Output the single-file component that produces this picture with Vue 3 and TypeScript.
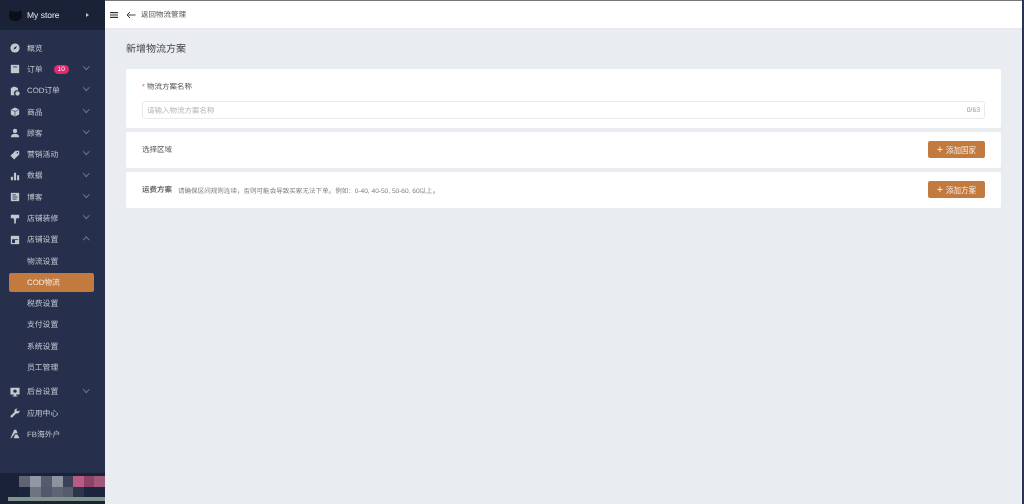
<script setup lang="ts">
type MenuItem = {
  label: string;
  icon?: string;
  arrow?: "down" | "up";
  badge?: string;
  active?: boolean;
  gap?: boolean;
};

const menu: MenuItem[] = [
  { label: "概览", icon: "overview" },
  { label: "订单", icon: "order", arrow: "down", badge: "10" },
  { label: "COD订单", icon: "cod", arrow: "down" },
  { label: "商品", icon: "box", arrow: "down" },
  { label: "顾客", icon: "user", arrow: "down" },
  { label: "营销活动", icon: "tag", arrow: "down" },
  { label: "数据", icon: "chart", arrow: "down" },
  { label: "博客", icon: "blog", arrow: "down" },
  { label: "店铺装修", icon: "brush", arrow: "down" },
  { label: "店铺设置", icon: "store", arrow: "up" },
  { label: "物流设置" },
  { label: "COD物流", active: true },
  { label: "税费设置" },
  { label: "支付设置" },
  { label: "系统设置" },
  { label: "员工管理" },
  { label: "后台设置", icon: "monitor", arrow: "down", gap: true },
  { label: "应用中心", icon: "wrench" },
  { label: "FB海外户", icon: "fb" },
];

// the blurred-out account block at the foot of the sidebar
const mosaic = [
  "#1a2238", "#5e6474", "#9396a3", "#565c6e", "#8f93a0", "#3b4157", "#b85c86", "#8f4268", "#a0597c",
  "#1a2238", "#1c2540", "#6f7280", "#52586b", "#5f6475", "#575c6c", "#2e3449", "#1c2540", "#1c2540",
];
</script>

<template>
  <div class="page">
    <aside class="side">
      <div class="store">
        <svg class="cat" viewBox="0 0 14 12"><path d="M1 0l3 2h6l3-2 1 6c0 4-3 6-7 6S0 10 0 6z" fill="#0c0f1a" /></svg>
        <span class="store-name">My store</span>
        <span class="store-arrow"></span>
      </div>
      <nav class="menu">
        <div
          v-for="item in menu"
          :key="item.label"
          class="row"
          :class="{ active: item.active, gap: item.gap, sub: !item.icon }"
        >
          <svg v-if="item.icon" class="icon" viewBox="0 0 12 12" fill="#c3c7d0">
            <template v-if="item.icon === 'overview'">
              <circle cx="6" cy="6" r="5.5" />
              <path d="M8.5 3.5L6.8 7 4 8l1.4-3z" fill="#26314e" />
            </template>
            <template v-else-if="item.icon === 'order'">
              <path d="M1 1h10v10H1z" />
              <path d="M3.5 3h5v1h-5z" fill="#26314e" />
            </template>
            <template v-else-if="item.icon === 'cod'">
              <path d="M5 .5l4.5 2v3a3.5 3.5 0 0 0-4 5.5H1V2.5z" />
              <circle cx="9" cy="9" r="2.6" />
            </template>
            <template v-else-if="item.icon === 'box'">
              <path d="M6 .5l5 2.5v6l-5 2.5L1 9V3z" />
              <path d="M1 3l5 2.5L11 3M6 5.5v6" fill="none" stroke="#26314e" stroke-width=".7" />
            </template>
            <template v-else-if="item.icon === 'user'">
              <circle cx="6" cy="3.5" r="2.6" />
              <path d="M1 11c0-3 2.5-4 5-4s5 1 5 4z" />
            </template>
            <template v-else-if="item.icon === 'tag'">
              <path d="M.5 7l6-6H11v4.5l-6 6z" />
              <circle cx="8.8" cy="3.2" r=".9" fill="#26314e" />
            </template>
            <template v-else-if="item.icon === 'chart'">
              <path d="M1 7h2.5v4H1zM4.7 2h2.6v9H4.7zM8.5 5H11v6H8.5z" />
            </template>
            <template v-else-if="item.icon === 'blog'">
              <path d="M1 1h10v10H1z" />
              <path d="M3 3.5h4M3 6h6M3 8.5h5" stroke="#26314e" />
            </template>
            <template v-else-if="item.icon === 'brush'">
              <path d="M1 1h10v4H1zM4.5 5h3v2H7v4.5H5V7h-.5z" />
            </template>
            <template v-else-if="item.icon === 'store'">
              <path d="M1 1h10v10H1z" />
              <path d="M2.5 5h7v1h-7zM2.5 6H6v3.5H2.5z" fill="#26314e" />
            </template>
            <template v-else-if="item.icon === 'monitor'">
              <path d="M.5 1h11v8h-4v1.5H9v1H3v-1h1.5V9h-4z" />
              <circle cx="6" cy="5" r="2" fill="#26314e" />
            </template>
            <template v-else-if="item.icon === 'wrench'">
              <path d="M11.5 3a3.2 3.2 0 0 1-4.2 3.5L3 11a1.4 1.4 0 0 1-2-2l4.500-4.300A3.2 3.2 0 0 1 9 .5L7.5 2.5 9 4z" />
            </template>
            <template v-else>
              <path d="M5 1h2.5L9 5H6l-4.500 6h-1z" />
              <path d="M6 6.5h3l2.5 4.5h-7z" />
            </template>
          </svg>
          <span class="label">{{ item.label }}</span>
          <span v-if="item.badge" class="badge">{{ item.badge }}</span>
          <span v-if="item.arrow" class="arrow" :class="item.arrow"></span>
        </div>
      </nav>
      <div class="mosaic">
        <i v-for="(c, i) in mosaic" :key="i" :style="{ background: c }"></i>
        <div class="mosaic-line"></div>
      </div>
    </aside>

    <main class="main">
      <header class="top">
        <svg class="burger" viewBox="0 0 8 6"><path d="M0 .7h8M0 3h8M0 5.3h8" stroke="#333" stroke-width="1.2" /></svg>
        <svg class="back" viewBox="0 0 10 8"><path d="M9.5 4H1M4 1L1 4l3 3" fill="none" stroke="#444" stroke-width="1" /></svg>
        <span class="back-text">返回物流管理</span>
      </header>
      <section class="content">
        <h1>新增物流方案</h1>
        <div class="card name-card">
          <div class="field-label"><span class="star">*</span> 物流方案名称</div>
          <div class="input">
            <span class="placeholder">请输入物流方案名称</span>
            <span class="count">0/63</span>
          </div>
        </div>
        <div class="card action">
          <span class="card-title">选择区域</span>
          <button class="add"><span class="plus">+</span>添加国家</button>
        </div>
        <div class="card action">
          <span class="card-title strong">运费方案</span>
          <span class="hint">请确保区间规则连续，否则可能会导致买家无法下单。例如：0-40, 40-50, 50-60, 60以上。</span>
          <button class="add"><span class="plus">+</span>添加方案</button>
        </div>
      </section>
    </main>
  </div>
</template>

<style>
html,
body {
  margin: 0;
  overflow: hidden;
  background: #e9ecf1;
}
</style>

<style scoped>
.page {
  display: flex;
  width: 1024px;
  height: 504px;
  box-sizing: border-box;
  border-right: 2px solid #2a3350;
  overflow: hidden;
  font-family: "Liberation Sans", "Noto Sans CJK SC", sans-serif;
  text-rendering: geometricPrecision;
  background: #e9ecf1;
  filter: blur(0.45px);
}

.side {
  position: relative;
  flex: 0 0 105px;
  display: flex;
  flex-direction: column;
  background: #26304c;
}

.store {
  display: flex;
  align-items: center;
  height: 30px;
  padding-left: 9px;
  background: #1a2238;
  color: #e6e8ec;
}

.cat {
  width: 13px;
  height: 11px;
  margin-right: 5px;
}

.store-name {
  font-size: 8.5px;
}

.store-arrow {
  margin-left: 26px;
  border-left: 3px solid #c3c7d0;
  border-top: 2.5px solid transparent;
  border-bottom: 2.5px solid transparent;
}

.menu {
  padding-top: 7.5px;
}

.row {
  display: flex;
  align-items: center;
  height: 21.3px;
  padding-left: 10px;
  font-size: 7.8px;
  color: #c3c7d0;
  box-sizing: border-box;
}

.row.gap {
  margin-top: 3px;
}

.row.sub {
  padding-left: 27px;
}

.row.active {
  width: 85px;
  height: 19.5px;
  margin: 0.9px 0;
  margin-left: 9px;
  padding-left: 18px;
  background: #c27a3e;
  border-radius: 2px;
  color: #f4ede6;
}

.icon {
  width: 10px;
  height: 10px;
  margin-right: 7px;
  flex: none;
}

.label {
  white-space: nowrap;
}

.badge {
  margin-left: 11px;
  padding: 0 4px;
  height: 9px;
  line-height: 9px;
  border-radius: 5px;
  background: #e5286f;
  color: #fff;
  font-size: 6.5px;
}

.arrow {
  position: absolute;
  left: 84px;
  width: 3.5px;
  height: 3.5px;
  border-right: 1px solid #737b8f;
  border-bottom: 1px solid #737b8f;
}

.arrow.down {
  transform: translateY(-3px) rotate(45deg);
}

.arrow.up {
  transform: translateY(0) rotate(-135deg);
}

.mosaic {
  position: absolute;
  left: 0;
  right: 0;
  bottom: 0;
  height: 31px;
  display: grid;
  grid-template-columns: 19px 11px 11px 11px 11px 10px 11px 10px 11px;
  grid-auto-rows: 10.5px;
  padding-top: 3px;
  box-sizing: border-box;
  align-content: start;
  background: #1a2238;
}

.mosaic-line {
  position: absolute;
  left: 8px;
  right: 0;
  bottom: 3px;
  height: 4px;
  background: #7f958b;
}

.main {
  flex: 1;
  display: flex;
  flex-direction: column;
  min-width: 0;
}

.top {
  display: flex;
  align-items: center;
  height: 29px;
  box-sizing: border-box;
  padding-left: 5px;
  background: #fff;
  border-top: 1px solid #777;
  border-bottom: 1px solid #e4e7ec;
}

.burger {
  width: 8px;
  height: 6px;
  margin-right: 8px;
}

.back {
  width: 10px;
  height: 8px;
  margin-right: 5px;
}

.back-text {
  font-size: 7.5px;
  color: #555;
}

.content {
  flex: 1;
  padding: 14px 21px 0 21px;
}

h1 {
  margin: 0 0 12px;
  font-size: 10px;
  line-height: 14px;
  font-weight: 400;
  color: #444;
}

.card {
  background: #fff;
  border-radius: 2px;
  margin-bottom: 3.5px;
  padding: 0 16px;
}

.name-card {
  height: 59px;
  padding-top: 13px;
  box-sizing: border-box;
}

.field-label {
  font-size: 7.5px;
  line-height: 10px;
  color: #555;
  margin-bottom: 9px;
}

.star {
  color: #e8604c;
}

.input {
  display: flex;
  justify-content: space-between;
  align-items: center;
  height: 18px;
  box-sizing: border-box;
  padding: 0 4px;
  border: 1px solid #e8eaee;
  border-radius: 3px;
  font-size: 7.5px;
}

.placeholder {
  color: #b4b7bf;
}

.count {
  color: #999ca4;
  font-size: 6.8px;
}

.action {
  display: flex;
  align-items: center;
  height: 36px;
  margin-bottom: 4px;
}

.card-title {
  font-size: 7.5px;
  color: #555;
}

.card-title.strong {
  color: #666;
  font-weight: 700;
}

.hint {
  margin-left: 6px;
  font-size: 6.55px;
  color: #808080;
}

.add {
  margin-left: auto;
  width: 57px;
  height: 17px;
  padding: 0;
  border: 0;
  border-radius: 2px;
  background: #c27a3e;
  color: #f4ede6;
  font-family: inherit;
  font-size: 7.5px;
  display: flex;
  align-items: center;
  justify-content: center;
}

.plus {
  font-size: 10px;
  line-height: 10px;
  margin-right: 3px;
}
</style>
